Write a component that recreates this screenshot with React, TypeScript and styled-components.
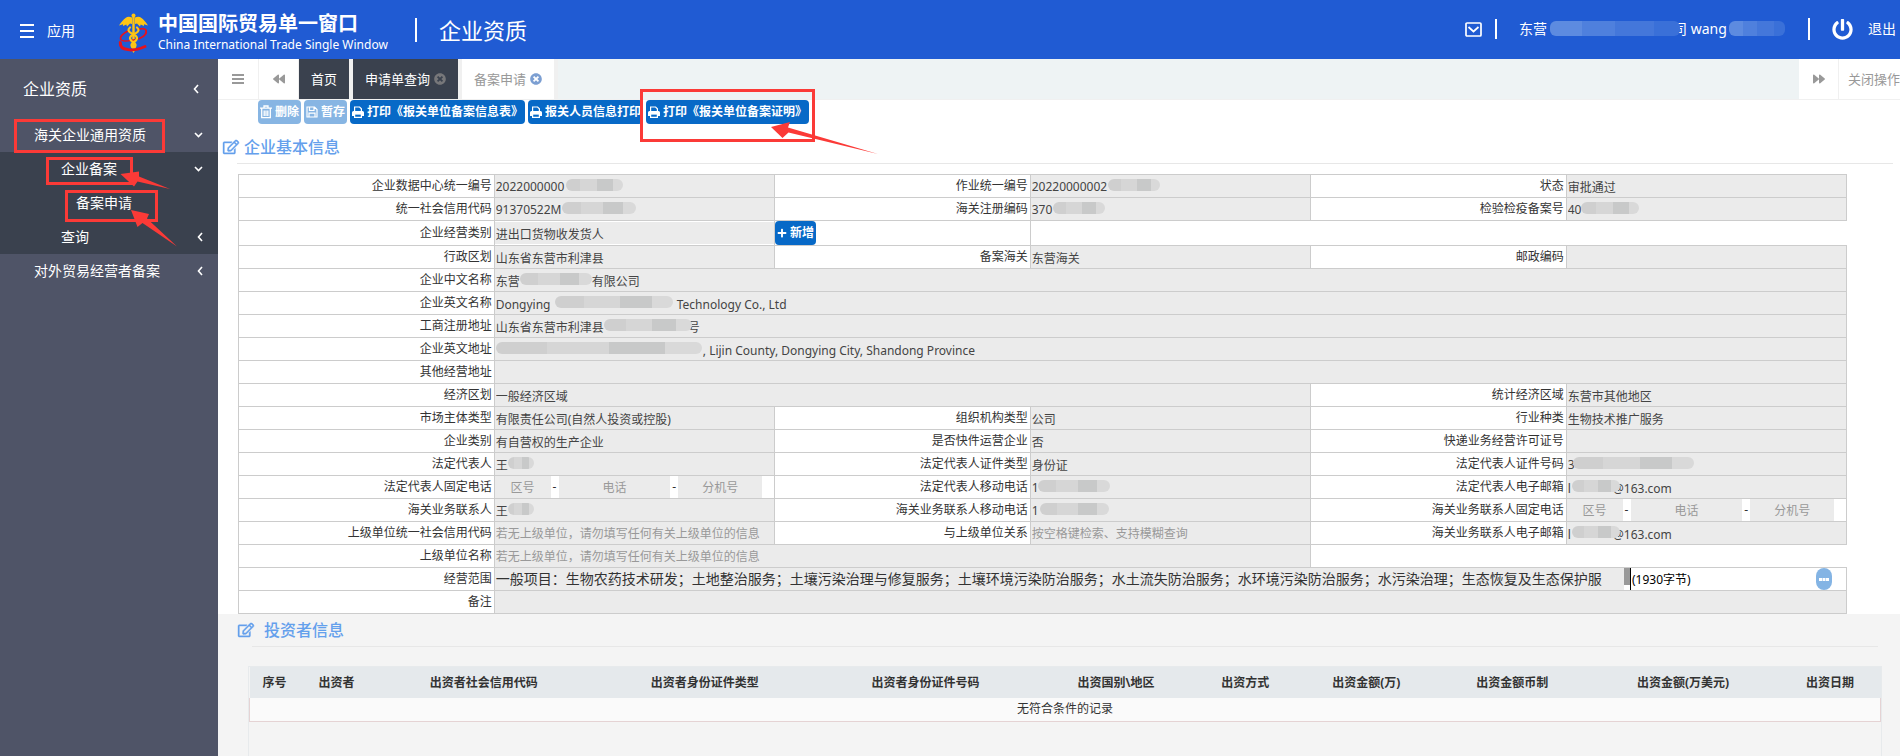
import React from 'react';
import styled, { createGlobalStyle, css } from 'styled-components';
import { FaBackward, FaForward, FaTimesCircle, FaPlus, FaRegEdit, FaPowerOff } from 'react-icons/fa';

const GlobalStyle = createGlobalStyle`
  * { box-sizing: border-box; }
  body {
    margin: 0;
    color: #333;
    background: #fff;
    font: 12px/18px "Noto Sans", "Noto Sans CJK SC", sans-serif;
    overflow-x: hidden;
  }
  button, input, textarea { font: inherit; color: inherit; margin: 0; border: 0; border-radius: 0; outline: 0; }
  button { cursor: pointer; }
  a { color: inherit; text-decoration: none; }
  h1, h2, p { margin: 0; font-weight: 400; }
`;

const Page = styled.div`
  display: flex;
  flex-direction: column;
  min-height: 100vh;
`;

/* ---------- top bar ---------- */

const TopBar = styled.header`
  display: flex;
  align-items: center;
  height: 59px;
  padding: 0 4px 0 20px;
  background: #205bd3;
  color: #fff;
  font-size: 14px;
  white-space: nowrap;
`;

const AppsButton = styled.button`
  display: flex;
  align-items: center;
  gap: 13px;
  width: 98px;
  padding: 3px 0 0;
  background: none;
  font-size: 14px;
`;

const Brand = styled.div`
  display: flex;
  align-items: center;
  gap: 9px;
  margin-right: 27px;
  padding-top: 6px;
`;

const BrandName = styled.div`
  font-size: 20px;
  line-height: 24px;
  font-weight: 700;
`;

const BrandSub = styled.div`
  font-size: 12px;
  line-height: 18px;
`;

const Divider = styled.span<{ $h: number }>`
  width: 2px;
  height: ${(p) => p.$h}px;
  background: #fff;
`;

const SystemName = styled.h1`
  margin-left: 22px;
  font-size: 22px;
  line-height: 30px;
`;

const UserArea = styled.div`
  display: flex;
  align-items: center;
  margin-left: auto;
  padding-bottom: 1px;
`;

const IconButton = styled.button`
  display: flex;
  margin-right: 13px;
  padding: 0;
  background: none;
`;

const UserName = styled.span`
  position: relative;
  width: 289px;
  margin-right: 22px;
  padding-left: 22px;
  white-space: pre;
`;

const LogoutLink = styled.a`
  display: flex;
  align-items: center;
  gap: 15px;
  margin-left: 22px;
`;

/* ---------- sidebar ---------- */

const Body = styled.div`
  display: flex;
  flex: 1;
`;

const Sidebar = styled.nav`
  position: relative;
  flex: 0 0 218px;
  background: #4f5467;
  color: #fff;
  font-size: 14px;
`;

const MenuList = styled.ul<{ $dark?: boolean }>`
  margin: 0;
  padding: 0;
  list-style: none;
  background: ${(p) => (p.$dark ? '#3a414e' : 'none')};
`;

const MenuLink = styled.a<{ $indent: number; $root?: boolean; $chevronPad?: number }>`
  display: flex;
  align-items: center;
  justify-content: space-between;
  height: ${(p) => (p.$root ? 59 : 34)}px;
  padding: 0 ${(p) => p.$chevronPad ?? 15}px 0 ${(p) => p.$indent}px;
  font-size: ${(p) => (p.$root ? 16 : 14)}px;
`;

/* ---------- red mark-up ---------- */

const RedBox = styled.span<{ $x: number; $y: number; $w: number; $h: number }>`
  position: absolute;
  z-index: 3;
  left: ${(p) => p.$x}px;
  top: ${(p) => p.$y}px;
  width: ${(p) => p.$w}px;
  height: ${(p) => p.$h}px;
  border: 3px solid #fb3a37;
  pointer-events: none;
`;

const ArrowSvg = styled.svg<{ $x: number; $y: number }>`
  position: absolute;
  z-index: 4;
  left: ${(p) => p.$x}px;
  top: ${(p) => p.$y}px;
  fill: #fb3a37;
  pointer-events: none;
`;

const Mask = styled.span<{ $x: number; $w: number; $blue?: boolean }>`
  position: absolute;
  z-index: 2;
  left: ${(p) => p.$x}px;
  top: 4px;
  width: ${(p) => p.$w}px;
  height: 12px;
  border-radius: 6px;
  background: ${(p) =>
    p.$blue
      ? 'linear-gradient(90deg, #5d8be0 0 25%, #4f80dd 25% 50%, #4477da 50% 80%, #3a70d8 80%)'
      : 'linear-gradient(90deg, #cfcfcf 0 25%, #d6d6d6 25% 55%, #c8c9c9 55% 82%, #d9d9d9 82%)'};
  ${(p) => p.$blue && css`top: 1px; height: 15px;`}
`;

/* ---------- tabs and toolbar ---------- */

const Main = styled.main`
  display: flex;
  flex-direction: column;
  flex: 1;
  min-width: 0;
`;

const TabStrip = styled.div`
  display: flex;
  height: 41px;
  background: #eef3f4;
  border-bottom: 1px solid #f0f0f0;
  color: #999;
  font-size: 13px;
`;

const StripButton = styled.button<{ $w: number }>`
  display: flex;
  flex: none;
  align-items: center;
  justify-content: center;
  width: ${(p) => p.$w}px;
  padding: 0;
  background: #fff;
  border-right: 1px solid #f0f0f0;
  white-space: nowrap;
`;

const CloseMenuButton = styled(StripButton)`
  justify-content: flex-end;
  border-right: 0;
`;

const Tab = styled.button<{ $active?: boolean }>`
  display: flex;
  align-items: center;
  gap: 4px;
  padding: 0 12px;
  background: ${(p) => (p.$active ? '#fff' : '#3a414e')};
  background-clip: padding-box;
  border-right: 4px solid #f0f0f0;
  color: ${(p) => (p.$active ? '#999' : '#fff')};
  white-space: nowrap;
  svg { color: ${(p) => (p.$active ? '#7c9fd2' : '#77777a')}; }
`;

const Spacer = styled.span`
  flex: 1;
`;

const Toolbar = styled.div`
  position: relative;
  display: flex;
  gap: 3px;
  padding-left: 40px;
`;

const ActionButton = styled.button<{ $muted?: boolean }>`
  display: inline-flex;
  align-items: center;
  gap: 3px;
  height: 24px;
  padding: 0 2px;
  border-radius: 4px;
  background: ${(p) => (p.$muted ? '#87b5e3' : '#0769c7')};
  color: #fff;
  font-weight: 700;
  white-space: nowrap;
`;

/* ---------- sections ---------- */

const SectionHead = styled.div<{ $second?: boolean }>`
  margin: ${(p) => (p.$second ? '0 22px 0 34px' : '0 7px 0 19px')};
  height: ${(p) => (p.$second ? 33 : 40)}px;
  border-bottom: 1px solid #e7e7e7;
`;

const SectionTitle = styled.h2<{ $second?: boolean }>`
  display: flex;
  align-items: center;
  gap: ${(p) => (p.$second ? 10 : 5)}px;
  margin-left: -14px;
  padding-top: ${(p) => (p.$second ? 4 : 11)}px;
  color: #64a0ec;
  font-size: 16px;
  line-height: 24px;
  font-weight: 500;
  svg { stroke: currentColor; stroke-width: 14px; overflow: visible; }
`;

const FormPanel = styled.form`
  padding: 10px 53px 0 20px;
`;

const FormTable = styled.table`
  width: 100%;
  table-layout: fixed;
  border-collapse: collapse;
`;

const LabelCell = styled.td`
  height: 23px;
  padding: 0 2px 0 0;
  border: 1px solid #ccc;
  text-align: right;
  white-space: nowrap;
  line-height: 18px;
`;

const FieldCell = styled.td<{ $plain?: boolean; $open?: boolean }>`
  height: 23px;
  padding: 0;
  border: 1px solid #ccc;
  background: ${(p) => (p.$plain ? '#fff' : '#ebebeb')};
  ${(p) => p.$open && css`border-right: 0;`}
`;

const FieldWrap = styled.div`
  position: relative;
  display: flex;
  align-items: center;
`;

const TextField = styled.input<{ $w?: string }>`
  width: ${(p) => p.$w ?? '100%'};
  min-width: 0;
  height: 22px;
  padding: 1px 1px 0;
  background: #ebebeb;
  color: #444;
  text-align: ${(p) => (p.$w ? 'center' : 'left')};
  &::placeholder { color: #999; opacity: 1; }
`;

const Dash = styled.span`
  width: 8px;
  text-align: center;
`;

const ScopeField = styled.textarea`
  display: block;
  width: calc(100% - 222px);
  height: 22px;
  padding: 1px 1px 0;
  background: #ebebeb;
  font-size: 14px;
  line-height: 20px;
  resize: none;
  overflow: hidden;
  white-space: nowrap;
`;

const ScrollTrack = styled.span`
  width: 7px;
  height: 22px;
  border-right: 1px solid #000;
  background: linear-gradient(#999 0 17px, #fff 17px);
`;

const ByteCount = styled.span`
  flex: 1;
  padding: 1px 0 0 1px;
  color: #000;
`;

const MoreButton = styled.button`
  width: 16px;
  height: 22px;
  margin-right: 14px;
  padding: 0;
  border-radius: 8px;
  background: #84b4e4;
  display: flex;
  align-items: center;
  justify-content: center;
`;

const InvestorPanel = styled.section`
  display: flex;
  flex-direction: column;
  flex: 1;
  background: #f4f4f4;
`;

const GridBox = styled.div`
  flex: 1;
  margin: 19px 18px 0 30px;
  border: 1px solid #e7eaec;
  border-bottom: 0;
`;

const Grid = styled.table`
  width: 100%;
  table-layout: fixed;
  border-collapse: collapse;
  text-align: center;
`;

const GridHead = styled.th`
  height: 31px;
  padding: 1px 0 0;
  background: #e5e9ec;
  font-weight: 700;
  white-space: nowrap;
`;

const EmptyCell = styled.td`
  height: 23px;
  padding: 0;
  background: #fafafa;
  border: 1px solid #e5d3d4;
  border-top: 0;
`;

/* ---------- drawings ---------- */

const Logo = () => (
  <svg width="31" height="40" viewBox="0 0 31 40" aria-hidden="true">
    <g fill="#ffc514">
      <path d="M14 4.400 Q10 2.600 7.500 5 Q4.500 7 1 12.500 L5 11.300 L5 13 L8.300 11.500 L9 13.500 L12 10.500 L14 11Z" />
      <path d="M17 4.400 Q21 2.600 23.500 5 Q26.500 7 30 12.500 L26 11.300 L26 13 L22.700 11.500 L22 13.500 L19 10.500 L17 11Z" />
      <circle cx="15.500" cy="2.500" r="2" />
      <path d="M14.300 4h2.400v34l-1.200 2l-1.200-2z" />
    </g>
    <g fill="none" stroke="#e5121f" strokeLinecap="round">
      <path d="M20 16.500 Q26 14.500 28 17 Q29.500 22 21.500 25.500" strokeWidth="1.800" />
      <path d="M10 18 Q2 22 2.500 26 Q4 30 20 26" strokeWidth="1.700" />
      <path d="M2.300 29.500 Q2 36 10 36.600 Q17 38 27 33.500" strokeWidth="3" />
    </g>
    <g fill="none" stroke="#ffc514" strokeWidth="2.200" strokeLinecap="round">
      <path d="M12 14.500 Q8.500 17.500 13 20 Q19.500 23 19 25.500 Q18.500 28 15.500 29.500 Q12.500 31.500 14 34" />
      <path d="M19 14.500 Q22.500 17.500 18 20 Q11.500 23 12 25.500 Q12.500 28 15.500 29.500 Q18.500 31.500 17 34" />
    </g>
  </svg>
);

const Bars = ({ w, h, color, t }: { w: number; h: number; color: string; t: number }) => (
  <svg width={w} height={h} fill={color} aria-hidden="true">
    <rect width={w} height={t} />
    <rect y={(h - t) / 2} width={w} height={t} />
    <rect y={h - t} width={w} height={t} />
  </svg>
);

const ChevronLeft = () => (
  <svg width="6" height="10" fill="none" stroke="#fff" strokeWidth="1.600" aria-hidden="true">
    <path d="M5 1 L1.500 5 L5 9" />
  </svg>
);

const ChevronDown = () => (
  <svg width="9" height="6" fill="none" stroke="#fff" strokeWidth="1.600" aria-hidden="true">
    <path d="M1 1 L4.500 4.500 L8 1" />
  </svg>
);

const Envelope = () => (
  <svg width="17" height="15" fill="none" stroke="#fff" strokeWidth="1.700" aria-hidden="true">
    <rect x="1" y="1" width="15" height="13" rx="1" />
    <path d="M3.500 5 L8.500 9.500 L13.500 5" />
  </svg>
);

const Trash = () => (
  <svg width="12" height="14" viewBox="0 0 12 14" fill="none" stroke="#fff" strokeWidth="1.300" aria-hidden="true">
    <path d="M0 3.200h12M4 3V1h4v2M1.700 3.500v9.200h8.600V3.500M4.200 5.500v5.500M6 5.500v5.500M7.800 5.500v5.500" />
  </svg>
);

const Floppy = () => (
  <svg width="12" height="12" viewBox="0 0 12 12" fill="none" stroke="#fff" strokeWidth="1.200" aria-hidden="true">
    <path d="M1 1h7.500L11 3.500V11H1zM3.500 1v3.500h4.500V1M3 11V7.200h6V11" />
  </svg>
);

const Printer = () => (
  <svg width="12" height="12" viewBox="0 0 12 12" aria-hidden="true">
    <path d="M2.600 6V1h5l1.800 1.800V6" fill="none" stroke="#fff" strokeWidth="1.200" />
    <path d="M0 6.500Q0 5 1.500 5h9Q12 5 12 6.500V10H9.800V8.200H2.200V10H0z" fill="#fff" />
    <path d="M2.600 7.800v3.500h6.800V7.800z" fill="none" stroke="#fff" strokeWidth="1.200" />
  </svg>
);

const Arrow = ({ x, y, w, h, points }: { x: number; y: number; w: number; h: number; points: string }) => (
  <ArrowSvg $x={x} $y={y} width={w} height={h} aria-hidden="true">
    <polygon points={points} />
  </ArrowSvg>
);

/* ---------- form data ---------- */

type Field = {
  label?: string;
  value?: string;
  hint?: string;
  span?: number;
  mask?: [number, number];
  kind?: 'phone' | 'scope' | 'add' | 'open';
};

const wide = (n: number) => '\u3000'.repeat(n);
const parentHint = '若无上级单位，请勿填写任何有关上级单位的信息';

const rows: Field[][] = [
  [
    { label: '企业数据中心统一编号', value: '2022000000', mask: [71, 57] },
    { label: '作业统一编号', value: '20220000002', mask: [77, 52] },
    { label: '状态', value: '审批通过' },
  ],
  [
    { label: '统一社会信用代码', value: '91370522M', mask: [67, 74] },
    { label: '海关注册编码', value: '370', mask: [22, 52] },
    { label: '检验检疫备案号', value: '40', mask: [14, 58] },
  ],
  [
    { label: '企业经营类别', value: '进出口货物收发货人' },
    { kind: 'add' },
    { kind: 'open', span: 3 },
  ],
  [
    { label: '行政区划', value: '山东省东营市利津县' },
    { label: '备案海关', value: '东营海关' },
    { label: '邮政编码', value: '' },
  ],
  [{ label: '企业中文名称', value: `东营${wide(6)}有限公司`, span: 5, mask: [25, 72] }],
  [{ label: '企业英文名称', value: `Dongying ${wide(10)} Technology Co., Ltd`, span: 5, mask: [60, 118] }],
  [{ label: '工商注册地址', value: `山东省东营市利津县${wide(7)}号`, span: 5, mask: [109, 88] }],
  [{ label: '企业英文地址', value: `${wide(17)}\u00a0, Lijin County, Dongying City, Shandong Province`, span: 5, mask: [1, 206] }],
  [{ label: '其他经营地址', value: '', span: 5 }],
  [
    { label: '经济区划', value: '一般经济区域', span: 3 },
    { label: '统计经济区域', value: '东营市其他地区' },
  ],
  [
    { label: '市场主体类型', value: '有限责任公司(自然人投资或控股)' },
    { label: '组织机构类型', value: '公司' },
    { label: '行业种类', value: '生物技术推广服务' },
  ],
  [
    { label: '企业类别', value: '有自营权的生产企业' },
    { label: '是否快件运营企业', value: '否' },
    { label: '快递业务经营许可证号', value: '' },
  ],
  [
    { label: '法定代表人', value: '王', mask: [13, 26] },
    { label: '法定代表人证件类型', value: '身份证' },
    { label: '法定代表人证件号码', value: '3', mask: [6, 121] },
  ],
  [
    { label: '法定代表人固定电话', kind: 'phone' },
    { label: '法定代表人移动电话', value: '1', mask: [7, 72] },
    { label: '法定代表人电子邮箱', value: `l${wide(3)}\u00a0\u00a0@163.com`, mask: [5, 48] },
  ],
  [
    { label: '海关业务联系人', value: '王', mask: [13, 26] },
    { label: '海关业务联系人移动电话', value: '1', mask: [9, 69] },
    { label: '海关业务联系人固定电话', kind: 'phone' },
  ],
  [
    { label: '上级单位统一社会信用代码', hint: parentHint },
    { label: '与上级单位关系', hint: '按空格键检索、支持模糊查询' },
    { label: '海关业务联系人电子邮箱', value: `l${wide(3)}\u00a0\u00a0@163.com`, mask: [5, 48] },
  ],
  [
    { label: '上级单位名称', hint: parentHint, span: 3 },
    { kind: 'open', span: 2 },
  ],
  [
    {
      label: '经营范围',
      kind: 'scope',
      span: 5,
      value:
        '一般项目：生物农药技术研发；土地整治服务；土壤污染治理与修复服务；土壤环境污染防治服务；水土流失防治服务；水环境污染防治服务；水污染治理；生态恢复及生态保护服',
    },
  ],
  [{ label: '备注', value: '', span: 5 }],
];

const investorColumns: [string, number][] = [
  ['序号', 50],
  ['出资者', 74],
  ['出资者社会信用代码', 221],
  ['出资者身份证件类型', 221],
  ['出资者身份证件号码', 221],
  ['出资国别\\地区', 160],
  ['出资方式', 99],
  ['出资金额(万)', 143],
  ['出资金额币制', 149],
  ['出资金额(万美元)', 193],
  ['出资日期', 101],
];
const investorTotal = investorColumns.reduce((sum, [, w]) => sum + w, 0);

const FieldBody = ({ field, id }: { field: Field; id: string }) => {
  if (field.kind === 'phone') {
    return (
      <FieldWrap>
        <TextField id={id} $w="20%" placeholder="区号" readOnly />
        <Dash>-</Dash>
        <TextField $w="40%" placeholder="电话" aria-label={`${field.label} 电话`} readOnly />
        <Dash>-</Dash>
        <TextField $w="30%" placeholder="分机号" aria-label={`${field.label} 分机号`} readOnly />
      </FieldWrap>
    );
  }
  if (field.kind === 'scope') {
    return (
      <FieldWrap>
        <ScopeField id={id} rows={1} value={field.value} readOnly />
        <ScrollTrack />
        <ByteCount>(1930字节)</ByteCount>
        <MoreButton type="button" aria-label="更多">
          <svg width="10" height="3" fill="#fff" aria-hidden="true">
            <rect width="3" height="3" />
            <rect x="3.500" width="3" height="3" />
            <rect x="7" width="3" height="3" />
          </svg>
        </MoreButton>
      </FieldWrap>
    );
  }
  return (
    <FieldWrap>
      <TextField id={id} value={field.value ?? ''} placeholder={field.hint} readOnly />
      {field.mask && <Mask $x={field.mask[0]} $w={field.mask[1]} />}
    </FieldWrap>
  );
};

const renderField = (field: Field, key: string) => {
  if (field.kind === 'add') {
    return (
      <FieldCell key={key} $plain>
        <FieldWrap>
          <ActionButton type="button"><FaPlus size={10} />新增</ActionButton>
        </FieldWrap>
      </FieldCell>
    );
  }
  if (field.kind === 'open') return <FieldCell key={key} $plain $open colSpan={field.span} />;
  return (
    <React.Fragment key={key}>
      <LabelCell><label htmlFor={key}>{field.label}</label></LabelCell>
      <FieldCell colSpan={field.span} $plain={field.kind === 'phone' || field.kind === 'scope' || field.label === '企业经营类别'}>
        <FieldBody field={field} id={key} />
      </FieldCell>
    </React.Fragment>
  );
};

export default function App() {
  return (
    <Page lang="zh-CN">
      <GlobalStyle />
      <TopBar>
        <AppsButton type="button"><Bars w={14} h={14} t={2} color="#fff" />应用</AppsButton>
        <Brand>
          <Logo />
          <div>
            <BrandName>中国国际贸易单一窗口</BrandName>
            <BrandSub>China International Trade Single Window</BrandSub>
          </div>
        </Brand>
        <Divider $h={24} />
        <SystemName>企业资质</SystemName>
        <UserArea>
          <IconButton type="button" aria-label="消息"><Envelope /></IconButton>
          <Divider $h={20} />
          <UserName>
            {`东营${wide(9)}司 wang`}
            <Mask $blue $x={53} $w={130} />
            <Mask $blue $x={232} $w={56} />
          </UserName>
          <Divider $h={22} />
          <LogoutLink href="#logout"><FaPowerOff size={21} />退出</LogoutLink>
        </UserArea>
      </TopBar>
      <Body>
        <Sidebar>
          <MenuList>
            <li>
              <MenuLink href="#qualification" $root $indent={23} $chevronPad={19}>企业资质<ChevronLeft /></MenuLink>
            </li>
            <li>
              <MenuLink href="#customs" $indent={34}>海关企业通用资质<ChevronDown /></MenuLink>
              <MenuList $dark>
                <li>
                  <MenuLink href="#record" $indent={61}>企业备案<ChevronDown /></MenuLink>
                  <MenuLink href="#apply" $indent={76}>备案申请</MenuLink>
                </li>
                <li><MenuLink href="#query" $indent={61}>查询<ChevronLeft /></MenuLink></li>
              </MenuList>
            </li>
            <li><MenuLink href="#trade" $indent={34}>对外贸易经营者备案<ChevronLeft /></MenuLink></li>
          </MenuList>
          <RedBox $x={14} $y={60} $w={151} $h={34} />
          <RedBox $x={46} $y={98} $w={87} $h={28} />
          <RedBox $x={65} $y={131} $w={93} $h={32} />
          <Arrow x={120} y={112} w={52} h={20} points="0.500,3 19,0.500 19,5.500 50,18 17.500,10.500 14,15.500" />
          <Arrow x={130} y={150} w={50} h={40} points="1,1 19,5 17,9.500 47,37.500 12.500,14 7.500,18" />
        </Sidebar>
        <Main>
          <TabStrip>
            <StripButton type="button" aria-label="收起菜单" $w={41}><Bars w={12} h={10} t={2} color="#999" /></StripButton>
            <StripButton type="button" aria-label="向左" $w={40}><FaBackward size={12} /></StripButton>
            <Tab type="button">首页</Tab>
            <Tab type="button">申请单查询<FaTimesCircle size={12} /></Tab>
            <Tab type="button" $active>备案申请<FaTimesCircle size={12} /></Tab>
            <Spacer />
            <StripButton type="button" aria-label="向右" $w={40}><FaForward size={12} /></StripButton>
            <CloseMenuButton type="button" $w={61}>关闭操作</CloseMenuButton>
          </TabStrip>
          <Toolbar>
            <ActionButton type="button" $muted><Trash />删除</ActionButton>
            <ActionButton type="button" $muted><Floppy />暂存</ActionButton>
            <ActionButton type="button"><Printer />打印《报关单位备案信息表》</ActionButton>
            <ActionButton type="button"><Printer />报关人员信息打印</ActionButton>
            <ActionButton type="button"><Printer />打印《报关单位备案证明》</ActionButton>
            <RedBox $x={422} $y={-11} $w={175} $h={53} />
            <Arrow x={552} y={22} w={110} h={34} points="1,5 20,0 18,5.500 108,32 18.500,10.500 12.500,16" />
          </Toolbar>
          <SectionHead>
            <SectionTitle><FaRegEdit size={16} />企业基本信息</SectionTitle>
          </SectionHead>
          <FormPanel>
            <FormTable>
              <colgroup>
                {[0, 1, 2].map((n) => (
                  <React.Fragment key={n}>
                    <col style={{ width: '15.9%' }} />
                    <col />
                  </React.Fragment>
                ))}
              </colgroup>
              <tbody>
                {rows.map((row, r) => (
                  <tr key={r}>{row.map((field, c) => renderField(field, `field-${r}-${c}`))}</tr>
                ))}
              </tbody>
            </FormTable>
          </FormPanel>
          <InvestorPanel>
            <SectionHead $second>
              <SectionTitle $second><FaRegEdit size={16} />投资者信息</SectionTitle>
            </SectionHead>
            <GridBox>
              <Grid>
                <colgroup>
                  {investorColumns.map(([name, w]) => (
                    <col key={name} style={{ width: `${(w / investorTotal) * 100}%` }} />
                  ))}
                </colgroup>
                <thead>
                  <tr>{investorColumns.map(([name]) => <GridHead key={name}>{name}</GridHead>)}</tr>
                </thead>
                <tbody>
                  <tr><EmptyCell colSpan={investorColumns.length}>无符合条件的记录</EmptyCell></tr>
                </tbody>
              </Grid>
            </GridBox>
          </InvestorPanel>
        </Main>
      </Body>
    </Page>
  );
}
